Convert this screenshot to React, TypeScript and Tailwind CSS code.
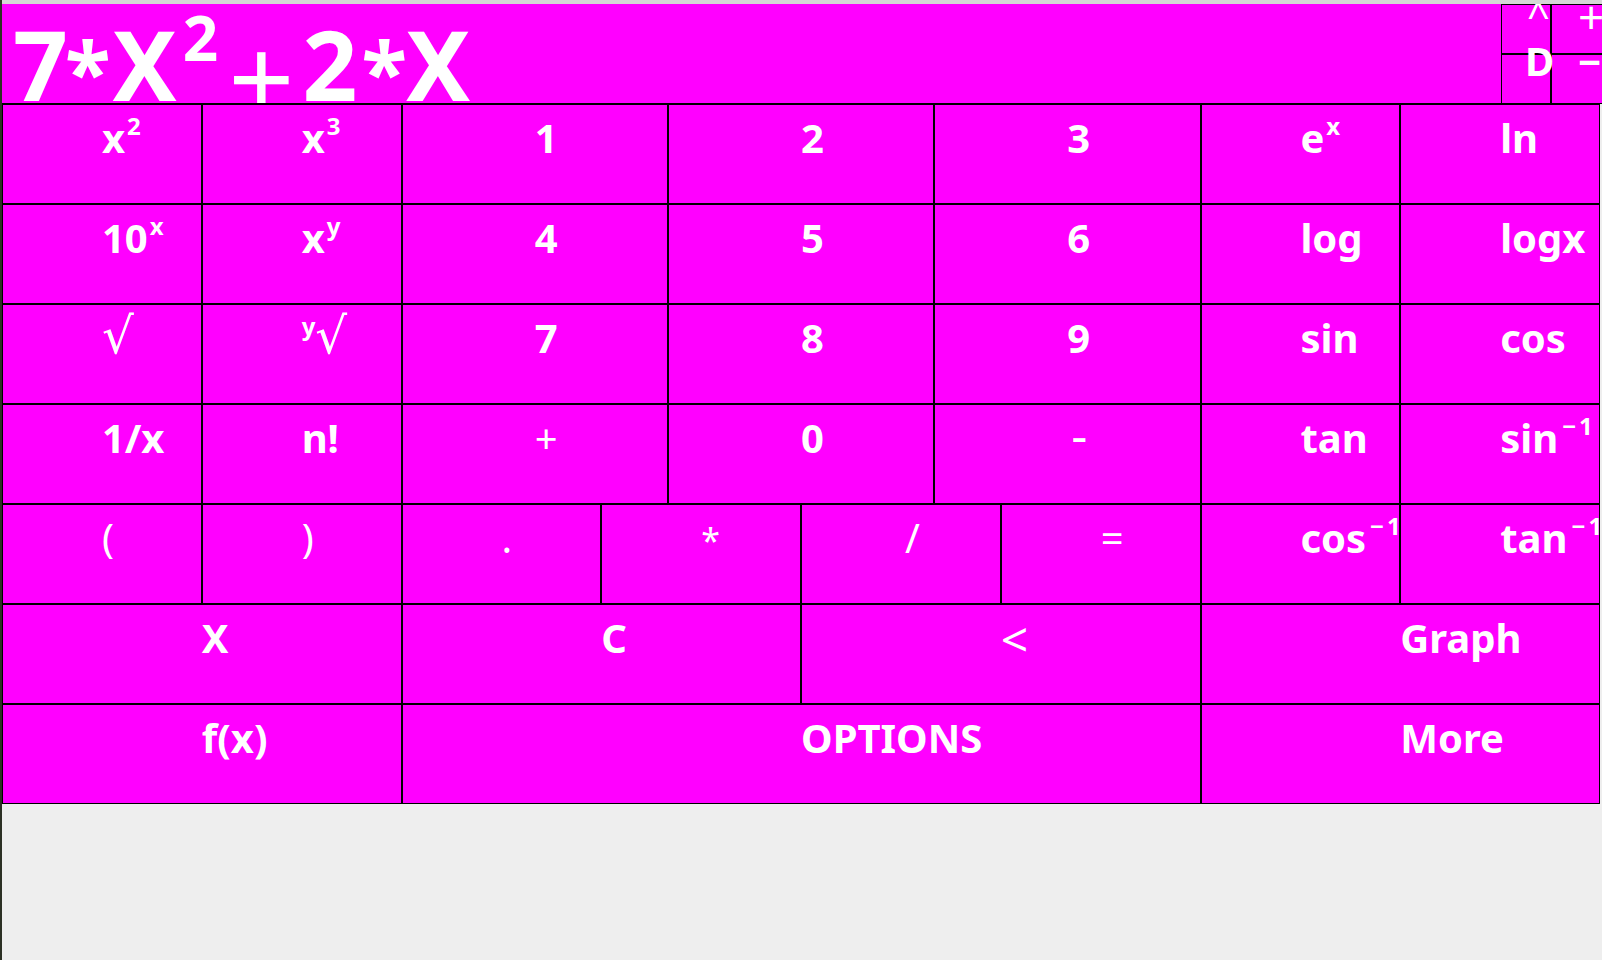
import React from "react";

function Sup({ children, ml = true }: { children: React.ReactNode; ml?: boolean }) {
  return (
    <span className={`relative -top-[18px] text-[24px] font-bold ${ml ? "ml-[2px]" : ""}`}>{children}</span>
  );
}

function B({ c, children, light }: { c: string; children: React.ReactNode; light?: boolean }) {
  return (
    <div className={`${c} border border-black bg-[#ff00ff] overflow-hidden`}>
      <div
        className={`pl-[50%] pt-[13px] leading-[40px] text-[40px] whitespace-nowrap text-white ${
          light ? "font-normal" : "font-bold"
        }`}
      >
        {children}
      </div>
    </div>
  );
}

function Root() {
  return <span className="text-[50px] leading-[30px] font-normal">√</span>;
}

export default function App() {
  return (
    <div className="w-[1602px] h-[960px] flex bg-[#eeeeee] overflow-hidden font-['Noto_Sans','DejaVu_Sans',sans-serif]">
      <div className="w-[2px] flex-none bg-[#2c3124]" />
      <div className="w-[1600px] flex-none flex flex-col overflow-hidden">
        <div className="h-[4px] flex-none bg-[#d6d6d6]" />
        <div className="flex h-[100px] flex-none">
          <div className="w-[1499px] h-[100px] flex-none bg-[#ff00ff] border-b border-black overflow-hidden">
            <div className="pl-[11px] pt-[10px] leading-[100px] text-[96px] font-bold text-white whitespace-nowrap tracking-[3px]">
              7<span className="ml-[-6px] text-[84px] align-[-2px]">*</span>
              <span className="ml-[-1px]">X</span>
              <span className="relative -top-[40px] ml-[3px] text-[62px]">2</span>
              <span className="ml-[7px] text-[116px] leading-[40px] font-normal align-[-20px]">+</span>
              <span className="ml-[5px]">2</span>
              <span className="ml-[1px] text-[84px] align-[-2px]">*</span>
              <span className="ml-[-4px]">X</span>
            </div>
          </div>
          <div className="relative flex-none w-[110px] h-[100px] grid grid-cols-[50px_60px] grid-rows-2 overflow-hidden text-white">
            <div className="border border-black bg-[#ff00ff]" />
            <div className="border border-black bg-[#ff00ff]" />
            <div className="border border-black bg-[#ff00ff]" />
            <div className="border border-black bg-[#ff00ff]" />
            <span className="absolute left-[26px] top-[-9px] text-[40px] leading-none font-normal">^</span>
            <span className="absolute left-[77px] top-[-11px] text-[46px] leading-none font-normal">+</span>
            <span className="absolute left-[24px] top-[37px] text-[40px] leading-none font-bold">D</span>
            <span className="absolute left-[77px] top-[38px] text-[40px] leading-none font-bold">−</span>
          </div>
        </div>
        <div className="w-[1598px] grid grid-cols-24 auto-rows-[100px]">
          <B c="col-span-3">x<Sup>2</Sup></B>
          <B c="col-span-3">x<Sup>3</Sup></B>
          <B c="col-span-4">1</B>
          <B c="col-span-4">2</B>
          <B c="col-span-4">3</B>
          <B c="col-span-3">e<Sup>x</Sup></B>
          <B c="col-span-3">ln</B>

          <B c="col-span-3">10<Sup>x</Sup></B>
          <B c="col-span-3">x<Sup>y</Sup></B>
          <B c="col-span-4">4</B>
          <B c="col-span-4">5</B>
          <B c="col-span-4">6</B>
          <B c="col-span-3">log</B>
          <B c="col-span-3">logx</B>

          <B c="col-span-3" light><Root /></B>
          <B c="col-span-3" light><Sup ml={false}>y</Sup><Root /></B>
          <B c="col-span-4">7</B>
          <B c="col-span-4">8</B>
          <B c="col-span-4">9</B>
          <B c="col-span-3">sin</B>
          <B c="col-span-3">cos</B>

          <B c="col-span-3">1/x</B>
          <B c="col-span-3">n!</B>
          <B c="col-span-4" light>+</B>
          <B c="col-span-4">0</B>
          <B c="col-span-4" light><span className="ml-[4px] text-[50px] leading-[30px]">-</span></B>
          <B c="col-span-3">tan</B>
          <B c="col-span-3">sin<Sup><span className="ml-[2px] tracking-[3px]">−1</span></Sup></B>

          <B c="col-span-3" light>(</B>
          <B c="col-span-3" light>)</B>
          <B c="col-span-3" light>.</B>
          <B c="col-span-3" light><span className="text-[34px] leading-[30px]">*</span></B>
          <B c="col-span-3" light><span className="ml-[4px]">/</span></B>
          <B c="col-span-3" light>=</B>
          <B c="col-span-3">cos<Sup><span className="ml-[2px] tracking-[3px]">−1</span></Sup></B>
          <B c="col-span-3">tan<Sup><span className="ml-[2px] tracking-[3px]">−1</span></Sup></B>

          <B c="col-span-6">X</B>
          <B c="col-span-6">C</B>
          <B c="col-span-6" light><span className="text-[48px] leading-[30px] align-[-4px]">&lt;</span></B>
          <B c="col-span-6">Graph</B>

          <B c="col-span-6">f(x)</B>
          <B c="col-span-12">OPTIONS</B>
          <B c="col-span-6">More</B>
        </div>
      </div>
    </div>
  );
}
